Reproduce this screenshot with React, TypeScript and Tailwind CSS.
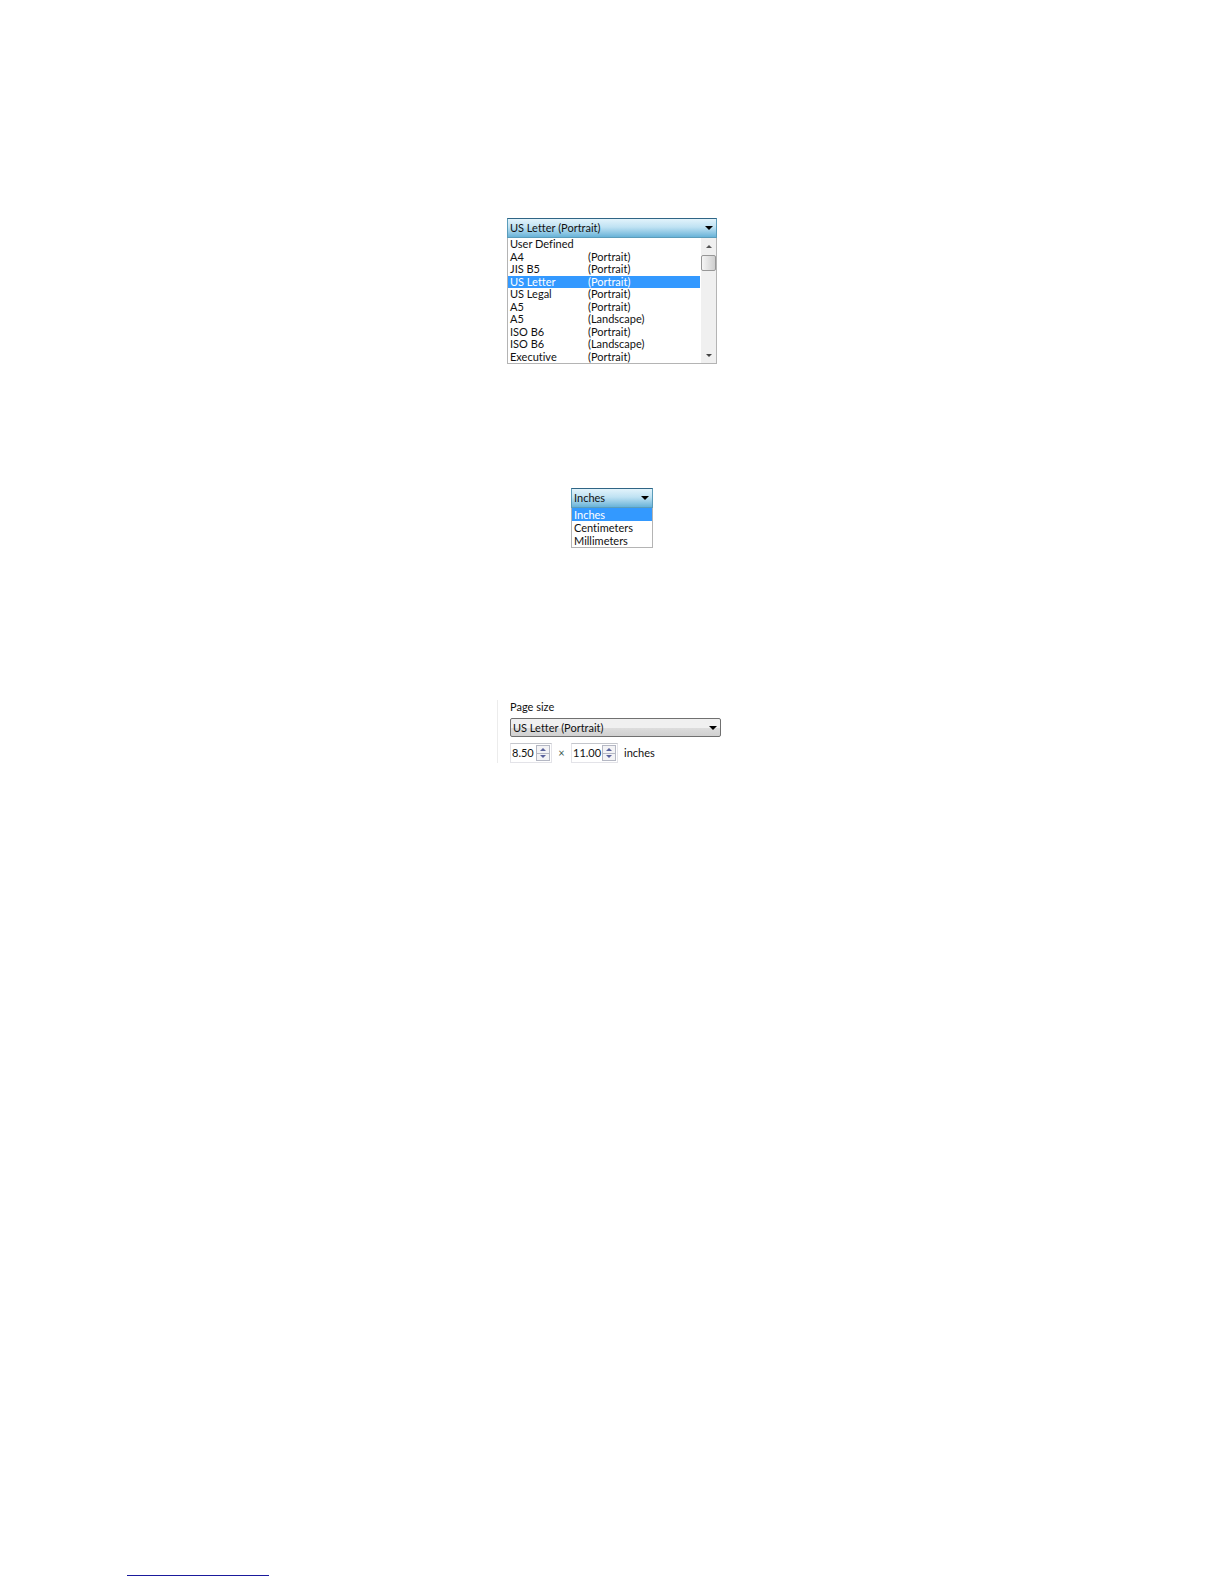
import { clsx } from "clsx";

type PageFormat = {
  name: string;
  orientation?: "Portrait" | "Landscape";
};

const pageFormats: PageFormat[] = [
  { name: "User Defined" },
  { name: "A4", orientation: "Portrait" },
  { name: "JIS B5", orientation: "Portrait" },
  { name: "US Letter", orientation: "Portrait" },
  { name: "US Legal", orientation: "Portrait" },
  { name: "A5", orientation: "Portrait" },
  { name: "A5", orientation: "Landscape" },
  { name: "ISO B6", orientation: "Portrait" },
  { name: "ISO B6", orientation: "Landscape" },
  { name: "Executive", orientation: "Portrait" },
];

const units = ["Inches", "Centimeters", "Millimeters"];

function Triangle({ up = false, className }: { up?: boolean; className?: string }) {
  return (
    <svg viewBox="0 0 8 4" className={className} fill="currentColor" aria-hidden>
      <path d={up ? "M0 4 4 0 8 4Z" : "M0 0H8L4 4Z"} />
    </svg>
  );
}

type ComboProps = {
  label: string;
  options: string[];
  open?: boolean;
};

function Combo({ label, options, open = false }: ComboProps) {
  return (
    <div className="relative">
      <select
        aria-label={label}
        className={clsx(
          "block w-full appearance-none border pr-5 pl-0.5 leading-4 outline-none",
          open
            ? "h-5 border-[#5b9cba] border-t-[#2f6585] bg-linear-to-b from-[#e2f3fb] via-[#bfe2f3] via-45% to-[#68b3d8]"
            : "h-[19px] rounded-xs border-[#707070] bg-linear-to-b from-[#f0f0f0] from-50% via-[#dddddd] via-52% to-[#d0d0d0]",
        )}
      >
        {options.map((option) => (
          <option key={option}>{option}</option>
        ))}
      </select>
      <Triangle className="pointer-events-none absolute top-2 right-1 h-1 w-2 text-black" />
    </div>
  );
}

function ScrollBar() {
  return (
    <div className="flex w-[15px] flex-col bg-[#f0f0f0]" aria-hidden>
      <div className="flex h-[17px] items-center justify-center">
        <Triangle up className="h-[3px] w-1.5 text-[#555]" />
      </div>
      <div className="h-4 rounded-xs border border-[#979797] bg-linear-to-r from-[#f5f5f5] to-[#cfcfcf]" />
      <div className="mt-auto flex h-4 items-center justify-center">
        <Triangle className="h-[3px] w-1.5 text-[#444]" />
      </div>
    </div>
  );
}

function PageFormatMenu() {
  return (
    <div className="w-[210px]">
      <Combo label="Page format" options={["US Letter (Portrait)"]} open />
      <div className="flex h-[126px] border border-t-0 border-[#b4b4b4]">
        <ul
          role="listbox"
          aria-label="Page formats"
          className="mr-px grid flex-1 grid-rows-10"
        >
          {pageFormats.map((format) => {
            const selected = format.name === "US Letter";
            return (
              <li
                key={`${format.name}-${format.orientation}`}
                role="option"
                aria-selected={selected}
                className={clsx(
                  "flex items-center pl-0.5 leading-3",
                  selected && "bg-[#3399ff] text-white",
                )}
              >
                <span className="w-[78px]">{format.name}</span>
                {format.orientation && <span>({format.orientation})</span>}
              </li>
            );
          })}
        </ul>
        <ScrollBar />
      </div>
    </div>
  );
}

function UnitMenu() {
  return (
    <div className="w-[82px]">
      <Combo label="Unit" options={["Inches"]} open />
      <ul role="listbox" aria-label="Units" className="border border-t-0 border-[#b4b4b4]">
        {units.map((unit) => (
          <li
            key={unit}
            role="option"
            aria-selected={unit === "Inches"}
            className={clsx(
              "pl-0.5 leading-[13px]",
              unit === "Inches" && "bg-[#3399ff] text-white",
            )}
          >
            {unit}
          </li>
        ))}
      </ul>
    </div>
  );
}

function Spinner({ label, value, className }: { label: string; value: string; className: string }) {
  return (
    <div className={clsx("flex h-5 border border-[#e3e3e8] border-t-[#c4c6cc] p-px", className)}>
      <input
        type="text"
        aria-label={label}
        defaultValue={value}
        className="min-w-0 flex-1 leading-4 outline-none"
      />
      <div className="flex w-3.5 flex-col">
        <button
          type="button"
          aria-label={`Increase ${label}`}
          className="flex flex-1 items-center justify-center border border-[#b5b8c4] bg-[#f3f3f5]"
        >
          <Triangle up className="h-[3px] w-1.5 text-[#5a629c]" />
        </button>
        <button
          type="button"
          aria-label={`Decrease ${label}`}
          className="flex flex-1 items-center justify-center border border-t-0 border-[#b5b8c4] bg-[#f3f3f5]"
        >
          <Triangle className="h-[3px] w-1.5 text-[#5a629c]" />
        </button>
      </div>
    </div>
  );
}

function PageSizePanel() {
  return (
    <section className="w-[230px] border-l border-[#ececec] pr-1.5 pl-3">
      <h2 className="leading-[14px]">Page size</h2>
      <div className="mt-1">
        <Combo label="Page size" options={["US Letter (Portrait)"]} />
      </div>
      <div className="mt-1.5 flex items-center">
        <Spinner label="Width" value="8.50" className="w-[42px]" />
        <span className="w-[19px] text-center leading-4 text-[#3c5a50]">×</span>
        <Spinner label="Height" value="11.00" className="w-[47px]" />
        <span className="ml-1.5 leading-4">inches</span>
      </div>
    </section>
  );
}

export default function App() {
  return (
    <main className="flex min-h-screen flex-col items-center bg-white pt-[218px] pb-2 font-[Lato,sans-serif] text-[11px] text-[#111] [font-variant-ligatures:none]">
      <PageFormatMenu />
      <div className="mt-[124px]">
        <UnitMenu />
      </div>
      <div className="mt-[152px]">
        <PageSizePanel />
      </div>
      <hr className="mt-auto ml-[127px] h-px w-[142px] self-start border-0 bg-[#1a1a9c]" />
    </main>
  );
}
